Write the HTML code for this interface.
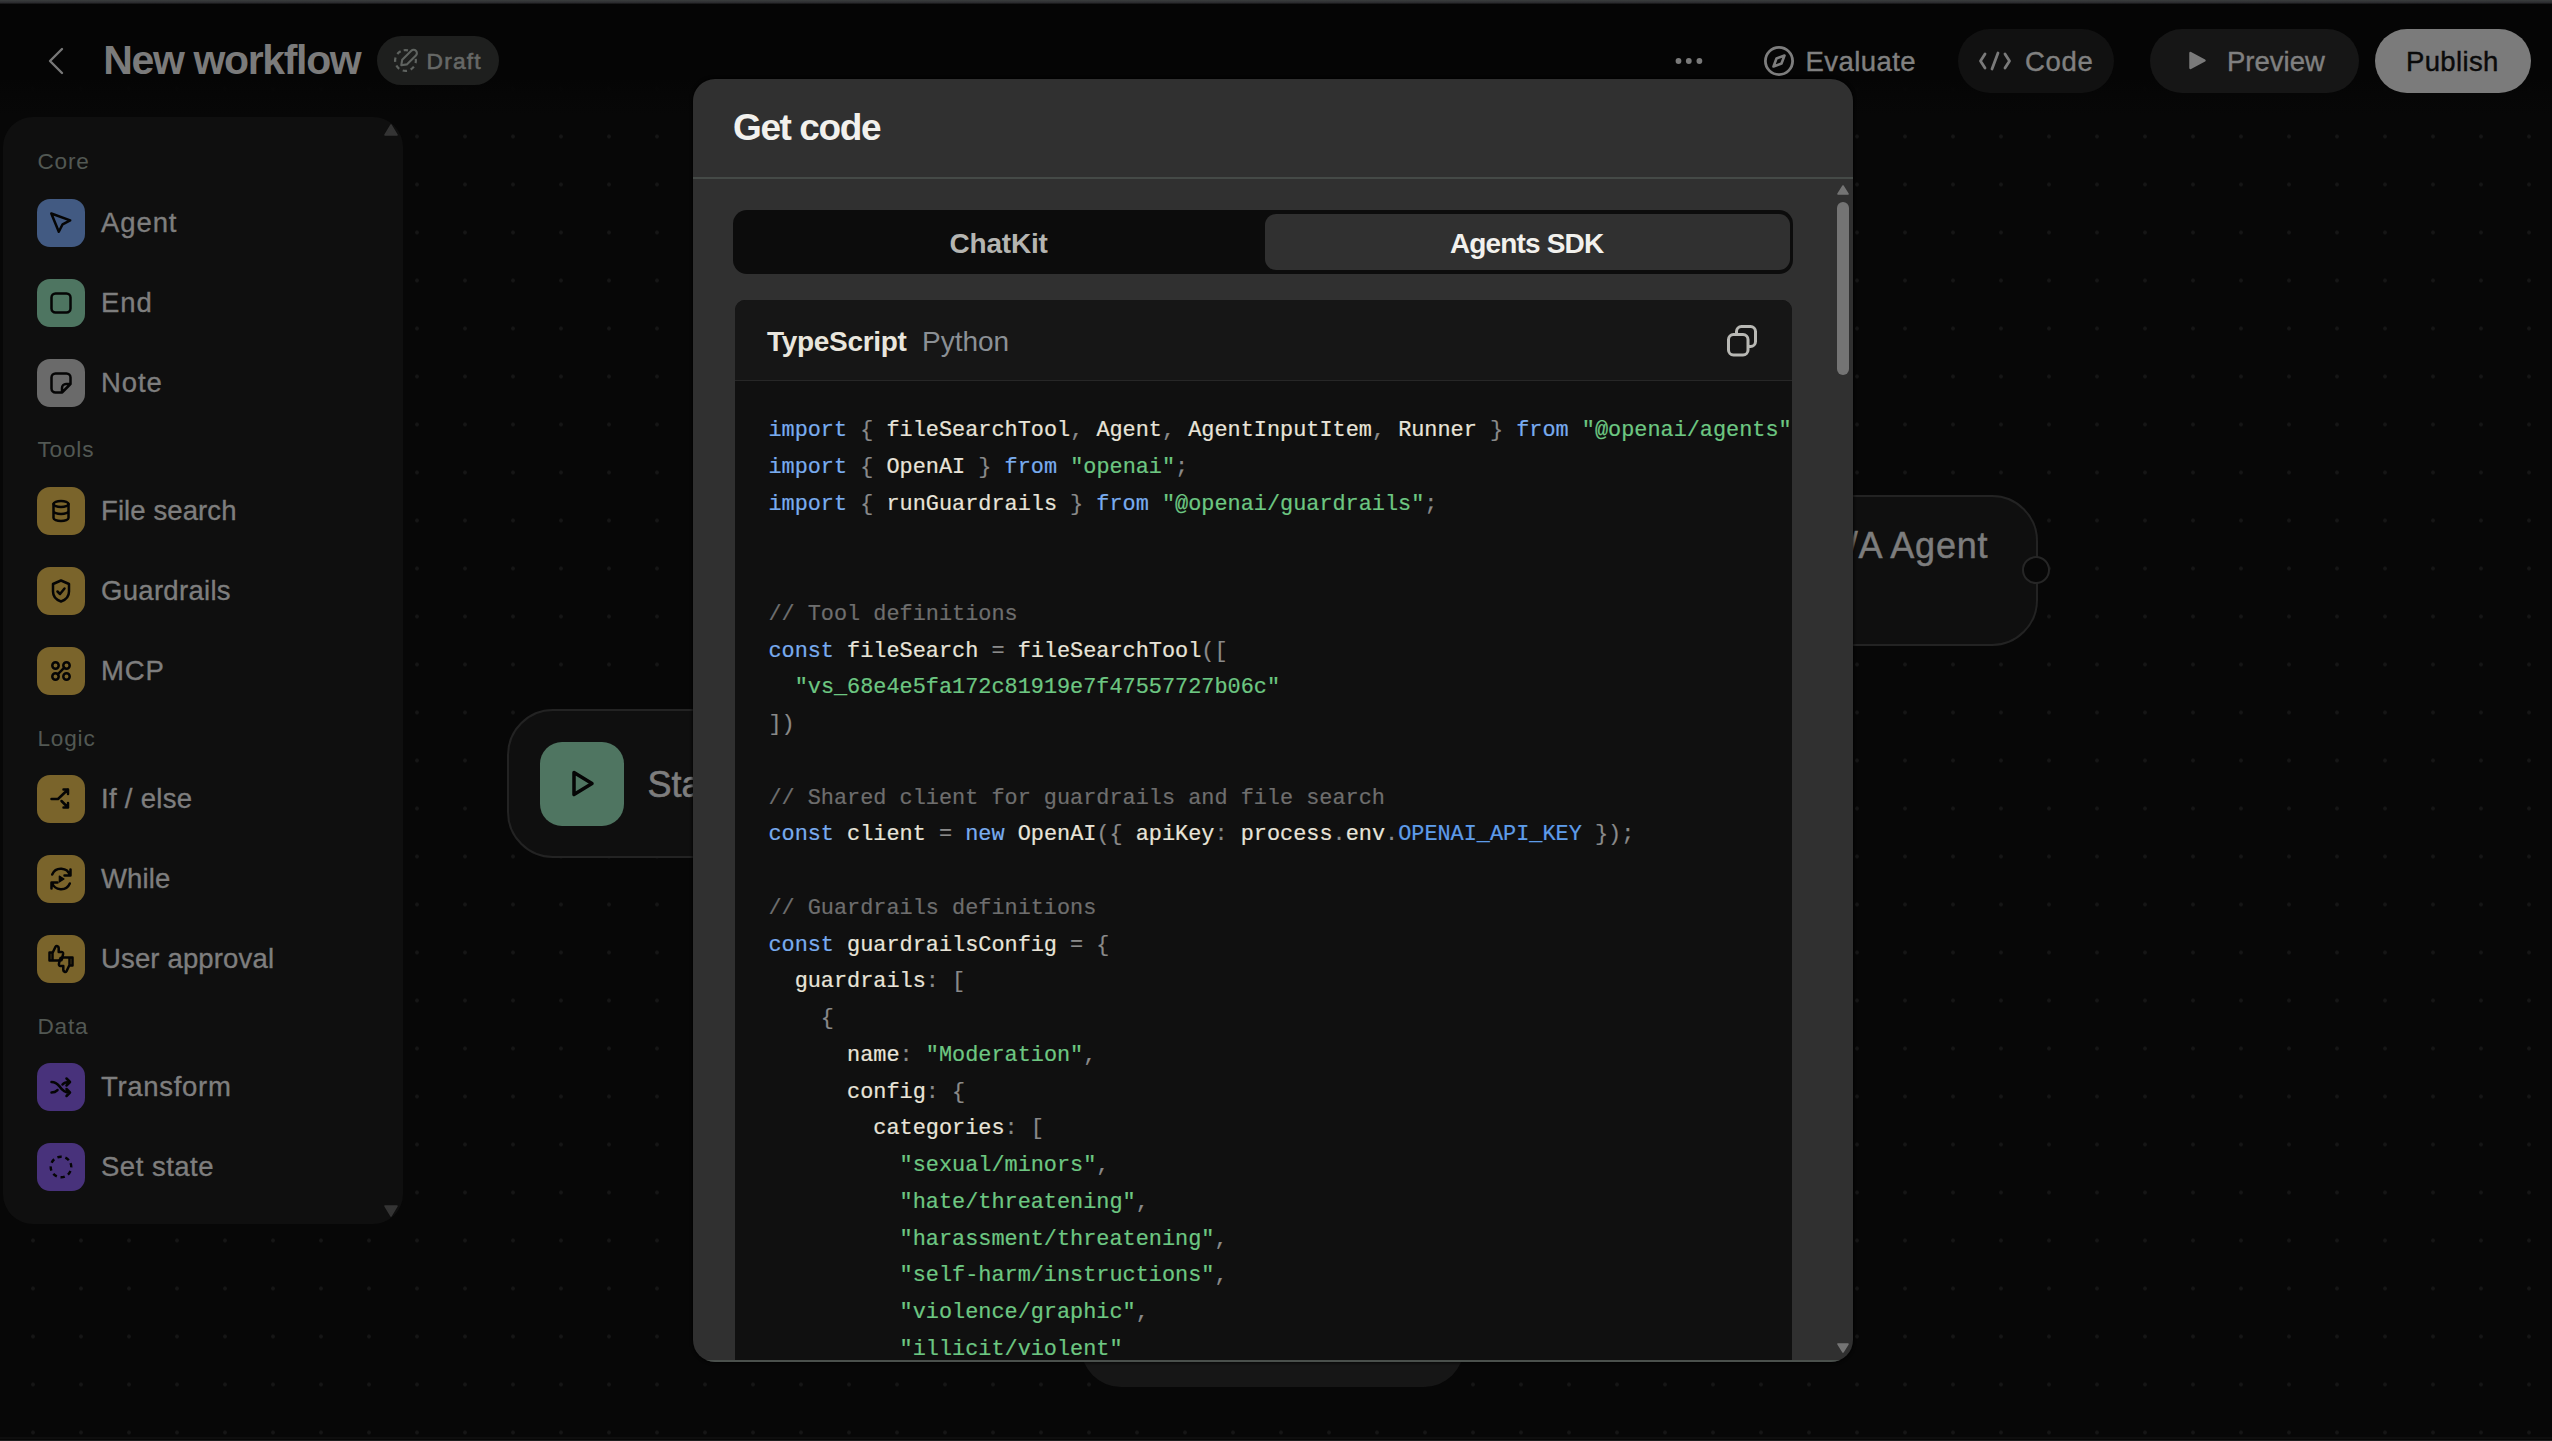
<!DOCTYPE html>
<html><head><meta charset="utf-8">
<style>
*{box-sizing:border-box;margin:0;padding:0}
html,body{width:2552px;height:1441px;overflow:hidden;background:#070707}
body{position:relative;font-family:"Liberation Sans",sans-serif}
.abs{position:absolute}
#dots{position:absolute;left:0;top:0;width:2552px;height:1441px;
 background-image:radial-gradient(circle at 24px 24px,#161616 0,#161616 1.5px,transparent 2.2px);
 background-size:48px 48px;background-position:9px 16.5px}
#topline{position:absolute;left:0;top:0;width:2552px;height:4px;background:linear-gradient(#3b3e3e,#2a2a2e 70%,#0e0e0e)}
.t{position:absolute;white-space:pre;line-height:1}
.pill{position:absolute;border-radius:40px}
/* sidebar */
#side{position:absolute;left:3px;top:117px;width:400px;height:1107px;background:#0f0f0f;border-radius:30px}
.lab{position:absolute;left:37.5px;font-size:22.6px;letter-spacing:0.8px;color:#525853;white-space:pre;line-height:1}
.item{position:absolute;left:37px;width:48px;height:48px;border-radius:13px}
.item svg{position:absolute;left:0;top:0}
.iname{position:absolute;left:101px;font-size:27.5px;letter-spacing:0.9px;color:#7e7e7e;white-space:pre;line-height:1;-webkit-text-stroke:0.35px #7e7e7e}
/* modal */
#modal{position:absolute;left:693px;top:79px;width:1160px;height:1283px;background:#303030;border-radius:22px;overflow:hidden;box-shadow:0 0 3px 1px rgba(0,0,0,0.7)}
.code{position:absolute;left:0;top:0;font-family:"Liberation Mono",monospace;font-size:21.87px;line-height:36.75px;white-space:pre;color:#e8e4d9;-webkit-text-stroke:0.2px currentColor}
.k{color:#79acef}.s{color:#6dc782}.p{color:#8a8a8a}.c{color:#6e6e6e}.e{color:#5e9ce9}
</style></head>
<body>
<div id="dots"></div>
<div class="abs" style="left:0;top:0;width:2552px;height:115px;background:linear-gradient(#050505 0,#050505 78px,rgba(6,6,6,0.9) 95px,rgba(7,7,7,0) 115px)"></div>
<div id="topline"></div>

<!-- header left -->
<svg class="abs" style="left:44px;top:44px" width="26" height="34" viewBox="0 0 26 34"><path d="M18 5 L6 17 L18 29" fill="none" stroke="#787878" stroke-width="2.4" stroke-linecap="round" stroke-linejoin="round"/></svg>
<div class="t" id="title" style="left:103.3px;top:40.4px;font-size:41px;font-weight:700;color:#7b7b7b;letter-spacing:-1.36px">New workflow</div>
<div class="pill" style="left:377px;top:36px;width:122px;height:49px;background:#1e1f1e"></div>
<svg class="abs" style="left:393px;top:48px" width="28" height="26" viewBox="0 0 28 26">
 <circle cx="12.5" cy="12.5" r="10.4" fill="none" stroke="#5f6360" stroke-width="2.2" stroke-dasharray="4.3 3.9" transform="rotate(-100 12.5 12.5)"/>
 <g transform="translate(8.3 17.2) rotate(-44.4)"><path d="M0 0 L4.5 -3.3 H17.2 a3.3 3.3 0 0 1 0 6.6 H4.5 Z" fill="#1e1f1e" stroke="#5f6360" stroke-width="2.1" stroke-linejoin="round"/></g>
</svg>
<div class="t" style="left:426.5px;top:49.5px;font-size:22.75px;font-weight:400;color:#666866;letter-spacing:1.2px;-webkit-text-stroke:0.6px #666866">Draft</div>

<!-- header right -->
<svg class="abs" style="left:1670px;top:52px" width="40" height="18" viewBox="0 0 40 18"><circle cx="8.5" cy="9" r="2.9" fill="#7a7a7a"/><circle cx="18.8" cy="9" r="2.9" fill="#7a7a7a"/><circle cx="29.4" cy="9" r="2.9" fill="#7a7a7a"/></svg>
<svg class="abs" style="left:1760px;top:42px" width="38" height="38" viewBox="0 0 38 38"><circle cx="19" cy="19" r="13.6" fill="none" stroke="#7d7d7d" stroke-width="2.8"/><path d="M24.5 13.5 L21.5 21.5 L13.5 24.5 L16.5 16.5 Z" fill="none" stroke="#7d7d7d" stroke-width="2.6" stroke-linejoin="round"/></svg>
<div class="t" style="left:1805.5px;top:47.6px;font-size:27.5px;color:#808080;letter-spacing:0.43px;-webkit-text-stroke:0.4px #808080">Evaluate</div>

<div class="pill" style="left:1958px;top:29px;width:156px;height:64px;background:#111111"></div>
<svg class="abs" style="left:1976px;top:48px" width="38" height="26" viewBox="0 0 38 26"><path d="M9 6 L4.5 13 L9 20 M29 6 L33.5 13 L29 20 M22 5 L16 21" fill="none" stroke="#7a7a7a" stroke-width="2.8" stroke-linecap="round" stroke-linejoin="round"/></svg>
<div class="t" style="left:2025px;top:47.6px;font-size:27.5px;color:#808080;letter-spacing:0.7px;-webkit-text-stroke:0.4px #808080">Code</div>

<div class="pill" style="left:2150px;top:29px;width:209px;height:64px;background:#161616"></div>
<svg class="abs" style="left:2185px;top:48px" width="26" height="26" viewBox="0 0 26 26"><path d="M5.5 5 L19.5 12.5 L5.5 20 Z" fill="#7a7a7a" stroke="#7a7a7a" stroke-width="2.5" stroke-linejoin="round"/></svg>
<div class="t" style="left:2227px;top:47.6px;font-size:27.5px;color:#808080;-webkit-text-stroke:0.4px #808080">Preview</div>

<div class="pill" style="left:2375px;top:29px;width:156px;height:64px;background:#7b7b7b"></div>
<div class="t" style="left:2406px;top:47.6px;font-size:27.5px;color:#0a0a0a;letter-spacing:0.35px;-webkit-text-stroke:0.4px #0a0a0a">Publish</div>

<!-- SIDEBAR -->
<div id="side"></div>
<svg class="abs" style="left:383px;top:122px" width="16" height="16" viewBox="0 0 16 16"><path d="M8 3 L14 13 L2 13 Z" fill="#343434" stroke="#343434" stroke-width="1.5" stroke-linejoin="round"/></svg>
<svg class="abs" style="left:383px;top:1203px" width="16" height="16" viewBox="0 0 16 16"><path d="M2 3 L14 3 L8 13 Z" fill="#343434" stroke="#343434" stroke-width="1.5" stroke-linejoin="round"/></svg>
<div id="sideitems"><div class="lab" style="top:151.3px">Core</div>
<div class="item" style="top:199px;background:#425a82"><svg width="48" height="48" viewBox="0 0 48 48"><path d="M14.3 14.5 L33.2 21.4 L25.6 25.3 L21.8 32.8 Z" fill="none" stroke="#050505" stroke-width="2.5" stroke-linecap="round" stroke-linejoin="round"/></svg></div>
<div class="iname" style="top:209.1px;letter-spacing:0.9px">Agent</div>
<div class="item" style="top:279px;background:#4e7561"><svg width="48" height="48" viewBox="0 0 48 48"><rect x="14.5" y="14.5" width="19" height="19" rx="4" fill="none" stroke="#050505" stroke-width="2.5" stroke-linecap="round" stroke-linejoin="round"/></svg></div>
<div class="iname" style="top:289.1px;letter-spacing:0.9px">End</div>
<div class="item" style="top:359px;background:#6a6a6a"><svg width="48" height="48" viewBox="0 0 48 48"><path d="M33.5 25 V18.5 a4 4 0 0 0 -4 -4 H18.5 a4 4 0 0 0 -4 4 V29.5 a4 4 0 0 0 4 4 H25 Z M33.5 25 H29 a4 4 0 0 0 -4 4 V33.5" fill="none" stroke="#050505" stroke-width="2.5" stroke-linecap="round" stroke-linejoin="round"/></svg></div>
<div class="iname" style="top:369.1px;letter-spacing:0.9px">Note</div>
<div class="lab" style="top:439.4px">Tools</div>
<div class="item" style="top:487px;background:#7a642b"><svg width="48" height="48" viewBox="0 0 48 48"><ellipse cx="24" cy="17" rx="7.5" ry="3" fill="none" stroke="#050505" stroke-width="2.5" stroke-linecap="round" stroke-linejoin="round"/><path d="M16.5 17 V31 a7.5 3 0 0 0 15 0 V17 M16.5 24 a7.5 3 0 0 0 15 0" fill="none" stroke="#050505" stroke-width="2.5" stroke-linecap="round" stroke-linejoin="round"/></svg></div>
<div class="iname" style="top:497.1px;letter-spacing:0.1px">File search</div>
<div class="item" style="top:567px;background:#7a642b"><svg width="48" height="48" viewBox="0 0 48 48"><path d="M24 13.5 L32 17 V24.5 C32 29.5 28.5 33 24 34.5 C19.5 33 16 29.5 16 24.5 V17 Z" fill="none" stroke="#050505" stroke-width="2.5" stroke-linecap="round" stroke-linejoin="round"/><path d="M20.5 24.5 L23 27 L27.5 21.5" fill="none" stroke="#050505" stroke-width="2.5" stroke-linecap="round" stroke-linejoin="round"/></svg></div>
<div class="iname" style="top:577.1px;letter-spacing:0.3px">Guardrails</div>
<div class="item" style="top:647px;background:#7a642b"><svg width="48" height="48" viewBox="0 0 48 48"><circle cx="18.5" cy="18.5" r="3.2" fill="none" stroke="#050505" stroke-width="2.5" stroke-linecap="round" stroke-linejoin="round"/><circle cx="29.5" cy="18.5" r="3.2" fill="none" stroke="#050505" stroke-width="2.5" stroke-linecap="round" stroke-linejoin="round"/><circle cx="18.5" cy="29.5" r="3.2" fill="none" stroke="#050505" stroke-width="2.5" stroke-linecap="round" stroke-linejoin="round"/><circle cx="29.5" cy="29.5" r="3.2" fill="none" stroke="#050505" stroke-width="2.5" stroke-linecap="round" stroke-linejoin="round"/><path d="M27.3 20.7 L20.7 27.3" fill="none" stroke="#050505" stroke-width="2.5" stroke-linecap="round" stroke-linejoin="round"/></svg></div>
<div class="iname" style="top:657.1px;letter-spacing:0.9px">MCP</div>
<div class="lab" style="top:727.5px">Logic</div>
<div class="item" style="top:775px;background:#7a642b"><svg width="48" height="48" viewBox="0 0 48 48"><path d="M14.5 24 H21 L31 14.5 M26.5 14.5 H31 V19 M24.5 26 L31 32.5 M31 28 V32.5 H26.5" fill="none" stroke="#050505" stroke-width="2.5" stroke-linecap="round" stroke-linejoin="round"/></svg></div>
<div class="iname" style="top:785.1px;letter-spacing:0.3px">If / else</div>
<div class="item" style="top:855px;background:#7a642b"><svg width="48" height="48" viewBox="0 0 48 48"><path d="M33 20.5 A9.5 9.5 0 0 0 15.2 19.5 M15 27.5 A9.5 9.5 0 0 0 32.8 28.5 M33.5 14.5 V20.5 H27.5 M14.5 33.5 V27.5 H20.5" fill="none" stroke="#050505" stroke-width="2.5" stroke-linecap="round" stroke-linejoin="round"/><path d="M22.3 21 L27 24 L22.3 27 Z" fill="#050505" stroke="#050505" stroke-width="1.2" stroke-linejoin="round"/></svg></div>
<div class="iname" style="top:865.1px;letter-spacing:0.15px">While</div>
<div class="item" style="top:935px;background:#7a642b"><svg width="48" height="48" viewBox="0 0 48 48"><path d="M12.5 17.5 H15.5 V25.5 H12.5 Z M15.5 18 L18.5 11.8 a1.8 1.8 0 0 1 3.2 1 V17 H24.5 a1.6 1.6 0 0 1 1.6 1.9 L25 24 a1.8 1.8 0 0 1 -1.8 1.5 H15.5" fill="none" stroke="#050505" stroke-width="2.5" stroke-linecap="round" stroke-linejoin="round"/><path d="M35.5 30.5 H32.5 V22.5 H35.5 Z M32.5 30 L29.5 36.2 a1.8 1.8 0 0 1 -3.2 -1 V31 H23.5 a1.6 1.6 0 0 1 -1.6 -1.9 L23 24 a1.8 1.8 0 0 1 1.8 -1.5 H32.5" fill="none" stroke="#050505" stroke-width="2.5" stroke-linecap="round" stroke-linejoin="round"/></svg></div>
<div class="iname" style="top:945.1px;letter-spacing:0.15px">User approval</div>
<div class="lab" style="top:1015.5px">Data</div>
<div class="item" style="top:1063px;background:#48327b"><svg width="48" height="48" viewBox="0 0 48 48"><path d="M14.5 19 C19.5 19 21 21.5 23 24 C25 27 27 29.5 32.5 29.5 M14.5 29.5 C18.5 29.5 19.5 28 20.5 27 M25.5 21.5 C27 19.5 28.5 19 32.5 19 M29.5 15.5 L33 19 L29.5 22.5 M29.5 26 L33 29.5 L29.5 33" fill="none" stroke="#050505" stroke-width="2.5" stroke-linecap="round" stroke-linejoin="round"/></svg></div>
<div class="iname" style="top:1073.1px;letter-spacing:0.7px">Transform</div>
<div class="item" style="top:1143px;background:#48327b"><svg width="48" height="48" viewBox="0 0 48 48"><circle cx="24" cy="24" r="10.3" fill="none" stroke="#050505" stroke-width="2.4" stroke-dasharray="4.3 3.79" transform="rotate(-22 24 24)"/></svg></div>
<div class="iname" style="top:1153.1px;letter-spacing:0.5px">Set state</div></div><!--endside-->

<!-- background nodes -->
<div class="abs" style="left:507px;top:709px;width:600px;height:149px;border:2.5px solid #232323;background:#0f0f0f;border-radius:46px"></div>
<div class="abs" style="left:540px;top:742px;width:84px;height:84px;background:#4f7561;border-radius:22px"></div>
<svg class="abs" style="left:540px;top:742px" width="84" height="84" viewBox="0 0 84 84"><path d="M34 30.5 L52 41.5 L34 52.5 Z" fill="none" stroke="#050505" stroke-width="3.5" stroke-linejoin="round"/></svg>
<div class="t" style="left:647.5px;top:767px;font-size:36px;color:#7d7d7d;-webkit-text-stroke:0.6px #7d7d7d">Start</div>

<div class="abs" style="left:1500px;top:495px;width:538px;height:151px;border:2.5px solid #232323;background:#0f0f0f;border-radius:46px"></div>
<div class="t" style="left:1819px;top:528px;font-size:36px;letter-spacing:0.8px;color:#7d7d7d;-webkit-text-stroke:0.5px #7d7d7d">Q/A Agent</div>
<div class="abs" style="left:2022px;top:556px;width:28px;height:28px;border-radius:50%;border:2.5px solid #262626;background:#070707"></div>

<div class="abs" style="left:1081px;top:1250px;width:383px;height:137px;background:#161616;border-radius:40px"></div>

<!-- MODAL -->
<div id="modal">
 <div class="t" style="left:40px;top:29.5px;font-size:37px;font-weight:700;color:#f2f1ed;letter-spacing:-1.4px">Get code</div>
 <div class="abs" style="left:0;top:98px;width:1160px;height:2px;background:#454a47"></div>
 <!-- segmented -->
 <div class="abs" style="left:40px;top:131px;width:1060px;height:64px;background:#0c0c0c;border-radius:14px"></div>
 <div class="abs" style="left:572px;top:135px;width:525px;height:56px;background:#303030;border-radius:11px"></div>
 <div class="t" style="left:256.5px;top:151px;font-size:28px;font-weight:700;color:#b5b5b1;letter-spacing:-0.2px">ChatKit</div>
 <div class="t" style="left:757px;top:151px;font-size:28px;font-weight:700;color:#f2f1ed;letter-spacing:-0.85px">Agents SDK</div>
 <!-- scrollbar -->
 <svg class="abs" style="left:1142px;top:104px" width="16" height="14" viewBox="0 0 16 14"><path d="M8 3 L13 11 L3 11 Z" fill="#747474" stroke="#747474" stroke-width="1.6" stroke-linejoin="round"/></svg>
 <div class="abs" style="left:1144px;top:123px;width:12px;height:173px;background:#747474;border-radius:6px"></div>
 <svg class="abs" style="left:1142px;top:1262px" width="16" height="14" viewBox="0 0 16 14"><path d="M3 3 L13 3 L8 11 Z" fill="#747474" stroke="#747474" stroke-width="1.6" stroke-linejoin="round"/></svg>
 <!-- code block -->
 <div class="abs" id="cb" style="left:42px;top:221px;width:1057px;height:1070px;background:#101010;border-radius:10px;overflow:hidden">
  <div class="abs" style="left:0;top:0;width:1057px;height:81px;background:#161616;border-bottom:1px solid #272727"></div>
  <div class="t" style="left:32px;top:28px;font-size:28px;font-weight:700;color:#e9e6dd;letter-spacing:-0.3px">TypeScript</div>
  <div class="t" style="left:187px;top:28px;font-size:28px;color:#8b9095">Python</div>
  <svg class="abs" style="left:990px;top:22px" width="40" height="40" viewBox="0 0 40 40">
   <rect x="11.5" y="4.5" width="19" height="20" rx="5" fill="none" stroke="#b8b8b4" stroke-width="3"/>
   <rect x="3.5" y="12.5" width="19.5" height="20.5" rx="5" fill="#161616" stroke="#b8b8b4" stroke-width="3"/>
  </svg>
  <div class="code" id="code" style="left:33.4px;top:113.2px"><span class="k">import</span><span class="p"> { </span>fileSearchTool<span class="p">, </span>Agent<span class="p">, </span>AgentInputItem<span class="p">, </span>Runner<span class="p"> } </span><span class="k">from</span> <span class="s">"@openai/agents"</span><span class="p">;</span>
<span class="k">import</span><span class="p"> { </span>OpenAI<span class="p"> } </span><span class="k">from</span> <span class="s">"openai"</span><span class="p">;</span>
<span class="k">import</span><span class="p"> { </span>runGuardrails<span class="p"> } </span><span class="k">from</span> <span class="s">"@openai/guardrails"</span><span class="p">;</span>


<span class="c">// Tool definitions</span>
<span class="k">const</span> fileSearch <span class="p">=</span> fileSearchTool<span class="p">([</span>
  <span class="s">"vs_68e4e5fa172c81919e7f47557727b06c"</span>
<span class="p">])</span>

<span class="c">// Shared client for guardrails and file search</span>
<span class="k">const</span> client <span class="p">=</span> <span class="k">new</span> OpenAI<span class="p">({ </span>apiKey<span class="p">: </span>process<span class="p">.</span>env<span class="p">.</span><span class="e">OPENAI_API_KEY</span><span class="p"> });</span>

<span class="c">// Guardrails definitions</span>
<span class="k">const</span> guardrailsConfig <span class="p">=</span><span class="p"> {</span>
  guardrails<span class="p">: [</span>
<span class="p">    {</span>
      name<span class="p">: </span><span class="s">"Moderation"</span><span class="p">,</span>
      config<span class="p">: {</span>
        categories<span class="p">: [</span>
<span class="s">          "sexual/minors"</span><span class="p">,</span>
<span class="s">          "hate/threatening"</span><span class="p">,</span>
<span class="s">          "harassment/threatening"</span><span class="p">,</span>
<span class="s">          "self-harm/instructions"</span><span class="p">,</span>
<span class="s">          "violence/graphic"</span><span class="p">,</span>
<span class="s">          "illicit/violent"</span>
<span class="p">        ]</span></div>
 </div>
 <div class="abs" style="left:0;top:1281px;width:1160px;height:2px;background:#4a504c"></div>
</div>
<div class="abs" style="left:0;top:1437px;width:2552px;height:2px;background:#0e0e0e"></div><div class="abs" style="left:0;top:1440px;width:2552px;height:1px;background:#1e1f1f"></div>
</body></html>
